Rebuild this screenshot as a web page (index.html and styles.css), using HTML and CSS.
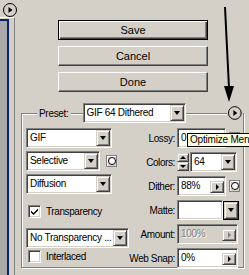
FILE: index.html
```html
<!DOCTYPE html>
<html>
<head>
<meta charset="utf-8">
<link rel="stylesheet" href="styles.css">
</head>
<body>
<div class="win">
  <div class="topbar">
    <svg class="menu-ico" width="16" height="16" viewBox="0 0 16 16"><circle cx="8" cy="8" r="6.5" fill="#d4d0c8" stroke="#000" stroke-width="1"/><path d="M6.5 5v6l4-3z" fill="#000"/></svg>
  </div>
  <div class="body">
    <div class="strip"><div class="canvas"></div></div>
    <div class="main">
      <div class="buttons">
        <div class="btn def"><span>Save</span></div>
        <div class="btn"><span>Cancel</span></div>
        <div class="btn"><span>Done</span></div>
      </div>
      <div class="group">
        <div class="ghead">
          <span class="glabel">Preset:</span>
          <div class="combo preset"><span class="val">GIF 64 Dithered</span><span class="dd"><i class="tri"></i></span></div>
          <svg class="menu-ico opt" width="16" height="16" viewBox="0 0 16 16"><circle cx="8" cy="8" r="6.5" fill="#d4d0c8" stroke="#000" stroke-width="1"/><path d="M6.5 5v6l4-3z" fill="#000"/></svg>
        </div>
        <div class="gbody">
          <div class="lcol">
            <div class="combo w86"><span class="val">GIF</span><span class="dd"><i class="tri"></i></span></div>
            <div class="rowi">
              <div class="combo w74"><span class="val">Selective</span><span class="dd"><i class="tri"></i></span></div>
              <span class="mask"><i></i></span>
            </div>
            <div class="combo w86"><span class="val">Diffusion</span><span class="dd"><i class="tri"></i></span></div>
            <label class="chk c1"><span class="box checked"><svg width="9" height="9" viewBox="0 0 9 9"><path d="M1 3.5l2.5 2.5L8 1.5v2L3.5 8 1 5.5z" fill="#000"/></svg></span>Transparency</label>
            <div class="combo w103 nt"><span class="val">No Transparency ...</span><span class="dd"><i class="tri"></i></span></div>
            <label class="chk c2"><span class="box"></span>Interlaced</label>
          </div>
          <div class="rcol">
            <span class="lab">Lossy:</span>
            <div class="rowi"><div class="field w49"><span class="val">0</span><span class="sb"><i class="rtri"></i></span></div><span class="mask m2"><i></i></span></div>
            <span class="lab">Colors:</span>
            <div class="rowi"><span class="spin"><span class="up"><i></i></span><span class="dn"><i></i></span></span><div class="combo w47"><span class="val">64</span><span class="dd"><i class="tri"></i></span></div></div>
            <span class="lab">Dither:</span>
            <div class="rowi"><div class="field w49"><span class="val">88%</span><span class="sb"><i class="rtri"></i></span></div><span class="mask m2"><i></i></span></div>
            <span class="lab">Matte:</span>
            <div class="rowi"><div class="field w46"></div><span class="mbtn"><i class="tri"></i></span></div>
            <span class="lab">Amount:</span>
            <div class="field w61 dis"><span class="val">100%</span><span class="sb"><i class="rtri"></i></span></div>
            <span class="lab">Web Snap:</span>
            <div class="field w61"><span class="val">0%</span><span class="sb"><i class="rtri"></i></span></div>
          </div>
        </div>
      </div>
    </div>
  </div>
  <div class="tooltip">Optimize Men</div>
  <svg class="arrow" width="249" height="110" viewBox="0 0 249 110"><line x1="225" y1="7" x2="229" y2="88" stroke="#000" stroke-width="2"/><path d="M224 86h10l-5 16z" fill="#000"/></svg>
</div>
</body>
</html>
```
FILE: styles.css
```css
html, body { margin: 0; padding: 0; }
body { background: #d4d0c8; font-family: "Liberation Sans", Arial, sans-serif; color: #000; }
.win { position: relative; width: 249px; height: 275px; overflow: hidden; background: #d4d0c8; }
.topbar { height: 17px; display: flex; align-items: flex-start; padding: 2px 0 0 2px; box-sizing: border-box; }
.menu-ico { display: block; }
.body { display: flex; height: 258px; }
.strip { width: 15px; box-sizing: border-box; border-top: 1px solid #fff; border-right: 1px solid #808080; padding: 1px 5px 0 0; }
.canvas { height: 100%; background: #a9a9a9; border-right: 2px solid #0a246a; border-top: 2px solid #0a246a; }
.main { flex: 1; }
.buttons { display: flex; flex-direction: column; gap: 6px; margin: 3px 0 0 43px; width: 150px; }
.btn { height: 20px; box-sizing: border-box; border: 1px solid; border-color: #fff #404040 #404040 #fff; box-shadow: inset -1px -1px #808080; display: flex; align-items: center; justify-content: center; font-size: 11px; }
.btn.def { border: 1px solid #000; box-shadow: inset 1px 1px #fff, inset -1px -1px #404040, inset -2px -2px #808080; }
.group { margin: 21px 0 0 6px; width: 223px; height: 155px; box-sizing: border-box; border: 1px solid #808080; box-shadow: inset 1px 1px #fff, 1px 1px #fff; padding: 0 4px 0 4px; }
.ghead { display: flex; align-items: center; height: 20px; margin: -11px -4px 0 -4px; }
.glabel { font-size: 10px; letter-spacing: -0.3px; background: #d4d0c8; margin-left: 15px; padding: 0 2px; }
.preset { width: 106px; margin-left: 12px; }
.opt { margin-left: 41px; background: #d4d0c8; }
.gbody { display: flex; margin-top: 5px; }
.lcol { width: 103px; display: flex; flex-direction: column; gap: 3px; }
.rcol { flex: 1; display: grid; grid-template-columns: 46px auto; column-gap: 2px; row-gap: 4px; grid-auto-rows: 20px; align-items: center; }
.lab { display: flex; justify-content: flex-end; font-size: 10px; letter-spacing: -0.4px; white-space: nowrap; }
.rowi { display: flex; align-items: center; }
.combo, .field { height: 20px; box-sizing: border-box; display: flex; background: #fff; border: 1px solid; border-color: #808080 #fff #fff #808080; padding: 1px; box-shadow: inset 1px 1px #404040, inset -1px -1px #d4d0c8; }
.val { flex: 1; font-size: 10px; letter-spacing: -0.3px; line-height: 16px; padding-left: 2px; white-space: nowrap; overflow: hidden; }
.dd, .sb, .mbtn, .spin span { box-sizing: border-box; background: #d4d0c8; border: 1px solid; border-color: #d4d0c8 #404040 #404040 #d4d0c8; box-shadow: inset 1px 1px #fff, inset -1px -1px #808080; display: flex; align-items: center; justify-content: center; }
.dd { width: 14px; height: 16px; flex: none; }
.sb { width: 14px; height: 12px; align-self: flex-end; margin-bottom: 1px; flex: none; }
.tri { width: 0; height: 0; border-left: 3.5px solid transparent; border-right: 3.5px solid transparent; border-top: 4px solid #000; }
.rtri { width: 0; height: 0; border-top: 3px solid transparent; border-bottom: 3px solid transparent; border-left: 3px solid #000; }
.w86 { width: 86px; } .w74 { width: 74px; } .w103 { width: 103px; } .w49 { width: 49px; } .w47 { width: 47px; } .w46 { width: 46px; } .w61 { width: 61px; }
.mask { width: 11px; height: 12px; box-sizing: border-box; border: 1px solid #808080; margin-left: 6px; display: flex; align-items: center; justify-content: center; background: #d4d0c8; box-shadow: inset 1px 1px #fff; flex: none; }
.mask i { width: 6px; height: 6px; border: 1px solid #000; border-radius: 50%; background: #fff; }
.mask.m2 { margin-left: 3px; }
.chk { display: flex; align-items: center; font-size: 10px; letter-spacing: -0.4px; height: 20px; gap: 5px; padding-left: 2px; }
.chk.c1 { margin-top: 4px; }
.nt { margin-top: 4px; }
.chk.c2 { height: 14px; margin-top: -2px; }
.box { width: 13px; height: 13px; box-sizing: border-box; background: #fff; border: 1px solid; border-color: #808080 #fff #fff #808080; box-shadow: inset 1px 1px #404040, inset -1px -1px #d4d0c8; display: flex; align-items: center; justify-content: center; flex: none; }
.spin { display: flex; flex-direction: column; width: 12px; height: 18px; margin-right: 1px; flex: none; }
.spin span { height: 9px; }
.spin .up i { border-left: 3px solid transparent; border-right: 3px solid transparent; border-bottom: 3px solid #000; }
.spin .dn i { border-left: 3px solid transparent; border-right: 3px solid transparent; border-top: 3px solid #000; }
.mbtn { width: 14px; height: 17px; margin-left: 1px; outline: 1px solid #000; flex: none; }
.field.dis { background: #d4d0c8; }
.field.dis .val { color: #808080; text-shadow: 1px 1px #fff; }
.field.dis .rtri { border-left-color: #808080; }
.tooltip { position: absolute; left: 187px; top: 133px; height: 14px; box-sizing: border-box; padding: 0 2px; border: 1px solid #000; border-right: 0; background: #ffffe1; font-size: 10px; letter-spacing: -0.2px; line-height: 12px; white-space: nowrap; }
.arrow { position: absolute; left: 0; top: 0; pointer-events: none; }
```
